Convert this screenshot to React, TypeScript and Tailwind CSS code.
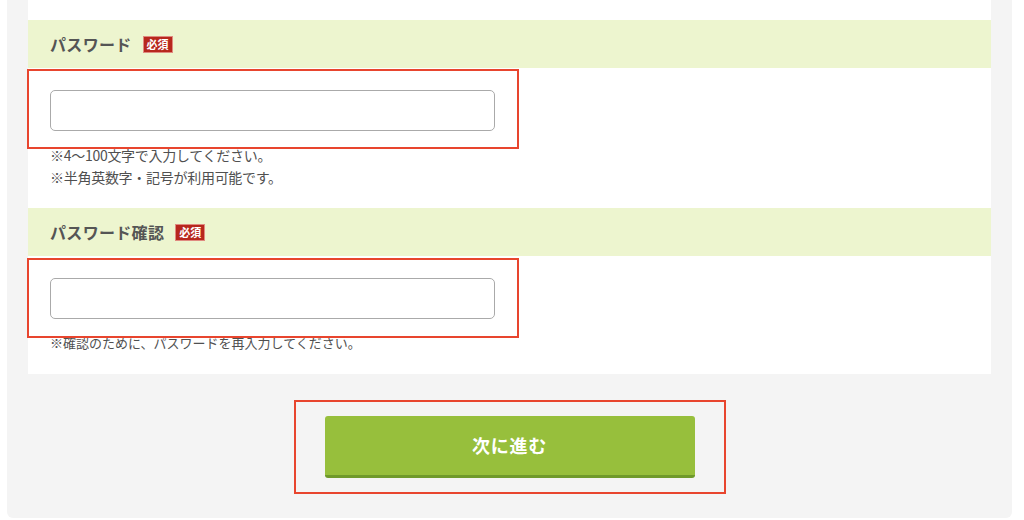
const FONT = "font-['Noto_Sans_CJK_JP','Noto_Sans',sans-serif]";

type FieldProps = {
  label: string;
  notes: string[];
  noteCls: string;
};

function Field({ label, notes, noteCls }: FieldProps) {
  return (
    <div>
      <div className="h-[48px] bg-[#edf5cf] pl-[22px] flex items-center gap-[11px]">
        <span className="text-[16px] font-bold text-[#555] tracking-[0.02em]">{label}</span>
        <span className="bg-[#b7271d] text-white text-[11px] font-bold leading-[15px] px-[3px] border border-[#e08a80]">必須</span>
      </div>
      <div className="pt-[22px] px-[22px]">
        <input
          type="password"
          className="block w-[445px] h-[41px] border border-[#aaa] rounded-[5px] bg-white px-3 outline-none"
        />
      </div>
      <div className={`px-[22px] pt-[13px] leading-[22px] text-[#505050] ${noteCls}`}>
        {notes.map(n => (
          <p key={n}>{n}</p>
        ))}
      </div>
    </div>
  );
}

export default function App() {
  return (
    <div className={`w-[1024px] h-[520px] bg-white overflow-hidden ${FONT}`}>
      <div className="ml-[7px] w-[1005px] h-[518px] bg-[#f4f4f4] rounded-b-[6px] px-[21px]">
        <div className="relative bg-white pt-[20px] pb-[20px]">
          <Field
            label="パスワード"
            noteCls="text-[14px] tracking-[-0.02em]"
            notes={['※4〜100文字で入力してください。', '※半角英数字・記号が利用可能です。']}
          />
          <div className="h-[20px]" />
          <Field
            label="パスワード確認"
            noteCls="text-[13px]"
            notes={['※確認のために、パスワードを再入力してください。']}
          />

          {/* annotation boxes */}
          <div className="absolute left-[-1px] top-[69px] w-[492px] h-[80px] border-2 border-[#e8452e]" />
          <div className="absolute left-[-1px] top-[258px] w-[492px] h-[80px] border-2 border-[#e8452e]" />
        </div>

        <div className="flex justify-center pt-[26px]">
          <div className="border-2 border-[#e8452e] w-[432px] h-[94px] flex items-center justify-center">
            <button
              type="button"
              className="w-[370px] h-[62px] bg-[#97bf3c] border-b-[3px] border-[#6f9a2b] rounded-[3px] text-white text-[18px] font-bold tracking-[0.04em]"
            >
              次に進む
            </button>
          </div>
        </div>
      </div>
    </div>
  );
}
